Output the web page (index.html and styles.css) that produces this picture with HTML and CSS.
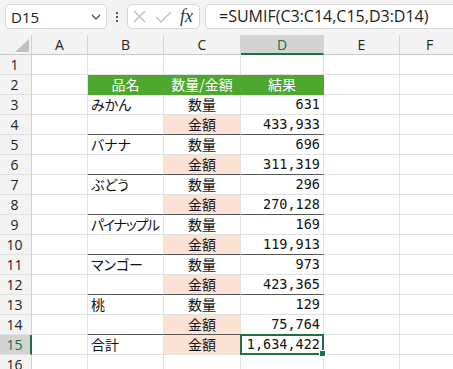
FILE: index.html
```html
<!DOCTYPE html>
<html lang="ja">
<head>
<meta charset="utf-8">
<title>Excel SUMIF</title>
<link rel="stylesheet" href="styles.css">
</head>
<body>
<div class="app">
  <div class="toolbar">
    <div class="namebox">
      <span class="nb-text">D15</span>
      <svg class="chev" width="10" height="6" viewBox="0 0 10 6"><polyline points="1,1 5,5 9,1" fill="none" stroke="#444" stroke-width="1.2"/></svg>
    </div>
    <div class="dots"><i></i><i></i><i></i></div>
    <div class="fbtns">
      <svg class="ic-x" width="13" height="13" viewBox="0 0 13 13"><path d="M1 1L12 12M12 1L1 12" stroke="#b8b8b8" stroke-width="1.1" fill="none"/></svg>
      <svg class="ic-ok" width="17" height="12" viewBox="0 0 17 12"><polyline points="1,6 6,11 16,1" fill="none" stroke="#b8b8b8" stroke-width="1.1"/></svg>
      <span class="fx">fx</span>
    </div>
    <div class="finput">=SUMIF(C3:C14,C15,D3:D14)</div>
  </div>
  <div class="sheet">
    <div class="corner"><svg width="14" height="13" viewBox="0 0 14 13"><polygon points="14,0 14,13 0,13" fill="#bfbfbf"/></svg></div>
    <div class="ch">A</div><div class="ch">B</div><div class="ch">C</div><div class="ch ch-sel">D</div><div class="ch">E</div><div class="ch">F</div>

    <div class="rh">1</div><div class="c"></div><div class="c"></div><div class="c"></div><div class="c"></div><div class="c"></div><div class="c"></div>

    <div class="rh">2</div><div class="c"></div><div class="c g">品名</div><div class="c g">数量/金額</div><div class="c g">結果</div><div class="c"></div><div class="c"></div>

    <div class="rh">3</div><div class="c"></div><div class="c tl">みかん</div><div class="c tc">数量</div><div class="c tr">631</div><div class="c"></div><div class="c"></div>
    <div class="rh">4</div><div class="c"></div><div class="c sep"></div><div class="c tc p sep">金額</div><div class="c tr sep">433,933</div><div class="c"></div><div class="c"></div>

    <div class="rh">5</div><div class="c"></div><div class="c tl">バナナ</div><div class="c tc">数量</div><div class="c tr">696</div><div class="c"></div><div class="c"></div>
    <div class="rh">6</div><div class="c"></div><div class="c sep"></div><div class="c tc p sep">金額</div><div class="c tr sep">311,319</div><div class="c"></div><div class="c"></div>

    <div class="rh">7</div><div class="c"></div><div class="c tl">ぶどう</div><div class="c tc">数量</div><div class="c tr">296</div><div class="c"></div><div class="c"></div>
    <div class="rh">8</div><div class="c"></div><div class="c sep"></div><div class="c tc p sep">金額</div><div class="c tr sep">270,128</div><div class="c"></div><div class="c"></div>

    <div class="rh">9</div><div class="c"></div><div class="c tl tight">パイナップル</div><div class="c tc">数量</div><div class="c tr">169</div><div class="c"></div><div class="c"></div>
    <div class="rh">10</div><div class="c"></div><div class="c sep"></div><div class="c tc p sep">金額</div><div class="c tr sep">119,913</div><div class="c"></div><div class="c"></div>

    <div class="rh">11</div><div class="c"></div><div class="c tl">マンゴー</div><div class="c tc">数量</div><div class="c tr">973</div><div class="c"></div><div class="c"></div>
    <div class="rh">12</div><div class="c"></div><div class="c sep"></div><div class="c tc p sep">金額</div><div class="c tr sep">423,365</div><div class="c"></div><div class="c"></div>

    <div class="rh">13</div><div class="c"></div><div class="c tl">桃</div><div class="c tc">数量</div><div class="c tr">129</div><div class="c"></div><div class="c"></div>
    <div class="rh">14</div><div class="c"></div><div class="c sep"></div><div class="c tc p sep">金額</div><div class="c tr sep">75,764</div><div class="c"></div><div class="c"></div>

    <div class="rh rh-sel">15</div><div class="c"></div><div class="c tl">合計</div><div class="c tc p">金額</div><div class="c tr sel">1,634,422</div><div class="c"></div><div class="c"></div>

    <div class="rh">16</div><div class="c"></div><div class="c"></div><div class="c"></div><div class="c"></div><div class="c"></div><div class="c"></div>
  </div>
</div>
</body>
</html>
```
FILE: styles.css
```css
html, body {
  margin: 0;
  padding: 0;
  background: #ffffff;
}
.app {
  width: 453px;
  height: 369px;
  overflow: hidden;
  font-family: "Noto Sans CJK JP", sans-serif;
}
.toolbar {
  height: 35px;
  box-sizing: border-box;
  background: #f3f3f3;
  display: flex;
  align-items: flex-start;
  padding: 4px 0 0 5px;
}
.namebox {
  width: 102px;
  height: 25px;
  box-sizing: border-box;
  background: #fff;
  border: 1px solid #d6d6d6;
  border-radius: 5px;
  display: flex;
  align-items: center;
  justify-content: space-between;
  padding: 0 5px 0 5px;
}
.nb-text {
  font-family: "Open Sans", sans-serif;
  font-size: 15px;
  color: #222;
}
.chev { margin-top: 1px; }
.dots {
  width: 20px;
  height: 25px;
  display: flex;
  flex-direction: column;
  align-items: center;
  justify-content: center;
  gap: 2px;
}
.dots i {
  display: block;
  width: 2px;
  height: 2px;
  background: #555;
}
.fbtns {
  width: 73px;
  height: 25px;
  box-sizing: border-box;
  background: #fff;
  border: 1px solid #d6d6d6;
  border-radius: 5px;
  display: flex;
  align-items: center;
  padding-left: 5px;
}
.ic-x { margin-right: 9px; }
.ic-ok { margin-right: 8px; }
.fx {
  font-family: "Liberation Serif", serif;
  font-style: italic;
  font-size: 18px;
  color: #333;
  line-height: 1;
  margin-top: -2px;
}
.finput {
  flex: 1;
  height: 25px;
  box-sizing: border-box;
  margin-left: 5px;
  margin-right: -10px;
  background: #fff;
  border: 1px solid #d6d6d6;
  border-radius: 5px;
  padding-left: 13px;
  font-family: "Open Sans", sans-serif;
  font-size: 16px;
  line-height: 23px;
  color: #222;
  white-space: nowrap;
}
.sheet {
  display: grid;
  grid-template-columns: 32px 56px 76px 77px 83px 76px 60px;
  grid-auto-rows: 20px;
}
.sheet > div {
  box-sizing: border-box;
  border-right: 1px solid #e1e1e1;
  border-bottom: 1px solid #e1e1e1;
  white-space: nowrap;
  overflow: hidden;
}
.corner {
  background: #f3f3f3;
  display: flex;
  align-items: flex-end;
  justify-content: flex-end;
  padding: 0 2px 2px 0;
  border-right-color: #cfcfcf !important;
  border-bottom-color: #c8c8c8 !important;
}
.ch {
  background: #f3f3f3;
  border-right-color: #d4d4d4 !important;
  border-bottom-color: #c8c8c8 !important;
  font-family: "Open Sans", sans-serif;
  font-size: 14px;
  line-height: 20px;
  color: #222;
  text-align: center;
}
.ch-sel {
  background: #d3d3d3;
  color: #1d6b3f;
  border-bottom: 2px solid #1e7145 !important;
  line-height: 19px;
}
.rh {
  background: #f3f3f3;
  border-right-color: #cfcfcf !important;
  border-bottom-color: #e1e1e1 !important;
  font-family: "Open Sans", sans-serif;
  font-size: 14px;
  line-height: 20px;
  color: #222;
  text-align: center;
  padding-right: 2px;
}
.rh-sel {
  background: #d3d3d3;
  color: #1d6b3f;
  border-right: 2px solid #1e7145 !important;
  padding-right: 1px;
}
.c {
  background: #fff;
  font-size: 14px;
  line-height: 19px;
  color: #111;
  font-feature-settings: "palt";
}
.g {
  background: #4ea72e;
  border-right-color: #4ea72e !important;
  border-bottom-color: #4ea72e !important;
  color: #fff;
  text-align: center;
}
.tl { padding-left: 3px; }
.tight { letter-spacing: -1.3px; }
.tc { text-align: center; }
.tr {
  text-align: right;
  padding-right: 3px;
  font-family: "DejaVu Sans Mono", monospace;
  font-size: 13.5px;
}
.p { background: #fbe2d5; }
.sep { border-bottom-color: #555 !important; }
.sheet > .sel {
  position: relative;
  overflow: visible;
}
.sel::after {
  content: "";
  position: absolute;
  left: -1px;
  top: -1px;
  right: -1px;
  bottom: -1px;
  border: 2px solid #1e7145;
}
.sel::before {
  content: "";
  position: absolute;
  right: -3px;
  bottom: -3px;
  width: 5px;
  height: 5px;
  background: #1e7145;
  border: 1px solid #fff;
  z-index: 2;
}
```
